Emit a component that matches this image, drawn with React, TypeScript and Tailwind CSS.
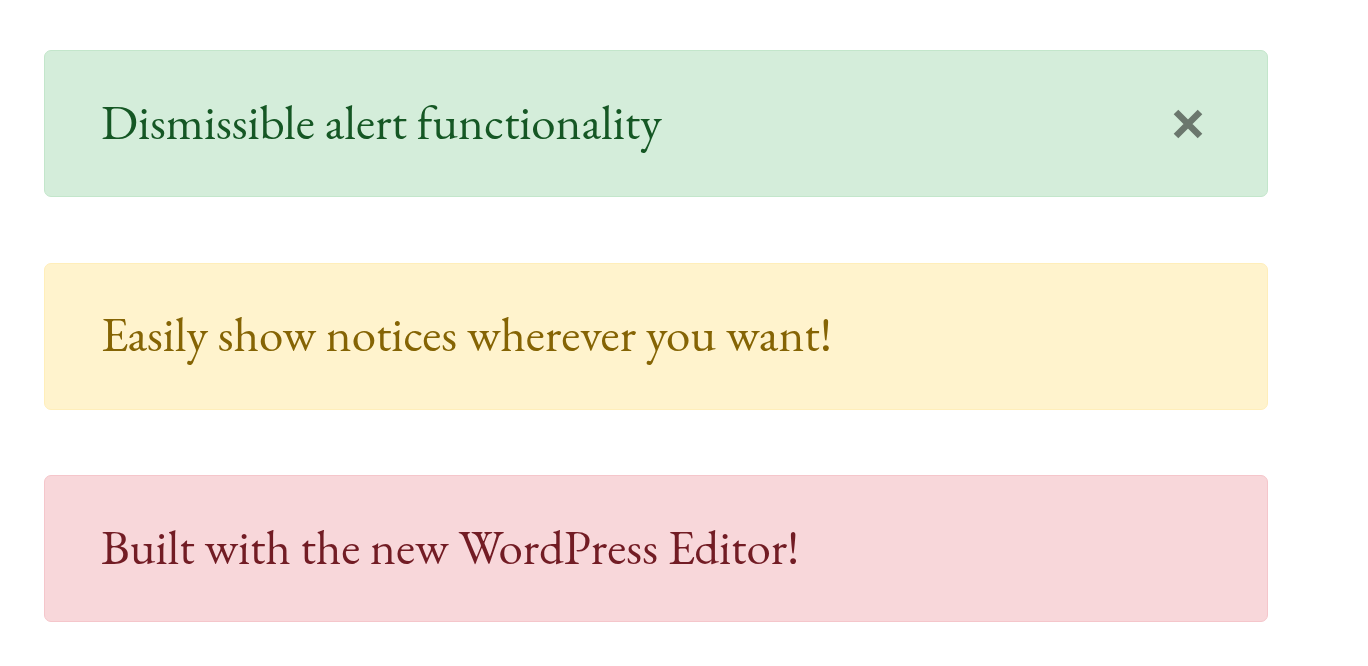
const alerts = [
  {
    text: "Dismissible alert functionality",
    box: "bg-[#d4edda] border-[#c3e6cb] text-[#155724]",
    dismissible: true,
  },
  {
    text: "Easily show notices wherever you want!",
    box: "bg-[#fff3cd] border-[#ffeeba] text-[#856404]",
    dismissible: false,
  },
  {
    text: "Built with the new WordPress Editor!",
    box: "bg-[#f8d7da] border-[#f5c6cb] text-[#721c24]",
    dismissible: false,
  },
];

export default function App() {
  return (
    <div className="min-h-screen bg-white pt-[50px] pl-[44px]">
      <div className="w-[1224px] flex flex-col gap-[65.5px]">
        {alerts.map((a) => (
          <div
            key={a.text}
            className={`h-[147px] border rounded-[7px] flex items-center justify-between pl-[56px] pr-[63px] ${a.box}`}
          >
            <p className="font-['EB_Garamond','Liberation_Serif',serif] text-[49px] leading-none -mt-[3px]">
              {a.text}
            </p>
            {a.dismissible && (
              <button className="text-[#6b776d]" aria-label="Close">
                <svg width="32" height="32" viewBox="0 0 32 32">
                  <path
                    d="M4 4 28 28M28 4 4 28"
                    stroke="currentColor"
                    strokeWidth="6.5"
                    strokeLinecap="butt"
                    fill="none"
                  />
                </svg>
              </button>
            )}
          </div>
        ))}
      </div>
    </div>
  );
}
